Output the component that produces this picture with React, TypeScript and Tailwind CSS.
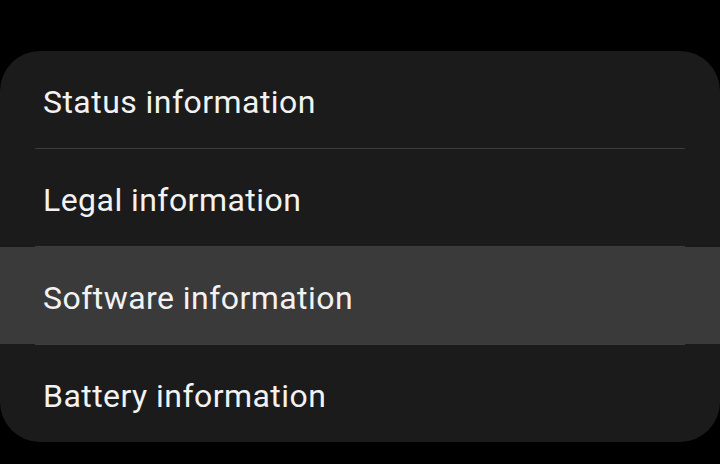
const items = [
  { label: "Status information", active: false },
  { label: "Legal information", active: false },
  { label: "Software information", active: true },
  { label: "Battery information", active: false },
];

export default function App() {
  return (
    <div
      className="h-[464px] w-[720px] overflow-hidden bg-black pt-[51px]"
      style={{ fontFamily: "Roboto, 'Noto Sans', sans-serif" }}
    >
      <div className="overflow-hidden rounded-[40px] bg-[#1b1b1b]">
        {items.map((item, i) => (
          <div key={item.label}>
            {i > 0 && <div className="mx-[35px] h-px bg-[#3c3c3c]" />}
            <div
              className={`flex h-[97px] items-center px-[43px] pt-[5px] text-[32px] tracking-[0.45px] text-[#f2f2f2] ${
                item.active ? "bg-[#3a3a3a]" : ""
              }`}
            >
              {item.label}
            </div>
          </div>
        ))}
      </div>
    </div>
  );
}
